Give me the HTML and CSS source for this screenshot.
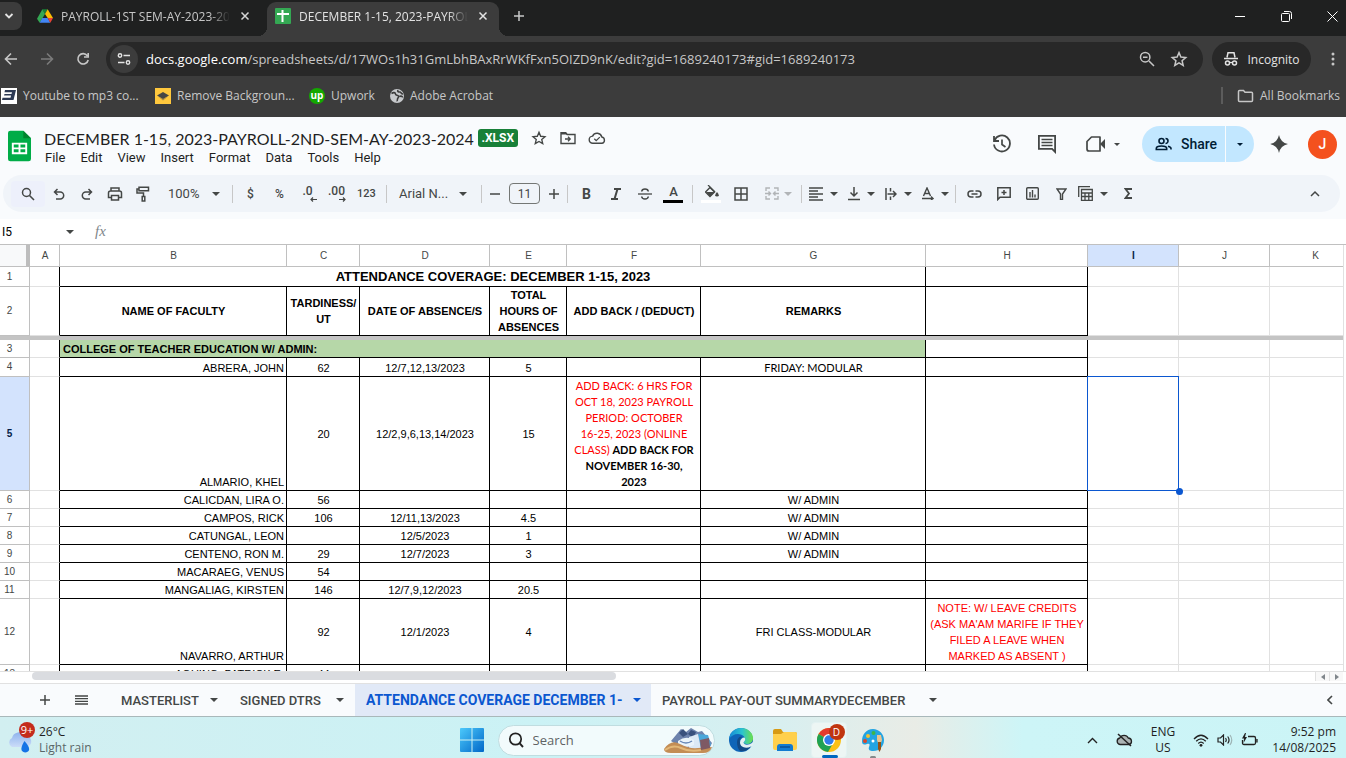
FILE: index.html
```html
<!DOCTYPE html>
<html lang="en">
<head>
  <meta charset="UTF-8">
  <meta name="viewport" content="width=device-width, initial-scale=1.0">
  <title>DECEMBER 1-15, 2023-PAYROLL-2ND-SEM-AY-2023-2024</title>
  <link rel="stylesheet" href="styles.css">
</head>
<body>

<!-- browser window -->
<div class="tabstrip">
  <button class="tab-search" aria-label="Search tabs"><svg width="10" height="10" viewBox="0 0 10 10"><path d="M1.500 3l3.500 3.500L8.500 3" fill="none" stroke="#e3e3e3" stroke-width="1.800"/></svg></button>
  <div class="tab">
    <svg width="16" height="16" viewBox="0 0 24 22"><path d="M8 1h8l-4 7z" fill="#188038"/><path d="M8 1L0 15l4 6 8-13z" fill="#34a853"/><path d="M16 1l-4 7 4 6h8z" fill="#fbbc04"/><path d="M4 21l4-7h8l4 7z" fill="#4285f4"/><path d="M16 14h8l-4 7z" fill="#ea4335"/></svg>
    <span class="tab-title">PAYROLL-1ST SEM-AY-2023-202</span>
    <button class="tab-close" aria-label="Close tab"><svg width="10" height="10" viewBox="0 0 10 10"><path d="M1.500 1.500l7 7m0-7l-7 7" stroke="#d5d5d5" stroke-width="1.500"/></svg></button>
  </div>
  <div class="tab active">
    <svg width="16" height="16" viewBox="0 0 16 16"><rect width="16" height="16" rx="1" fill="#34a853"/><path d="M6.500 2h2v12h-2zM2 5h12v2H2z" fill="#fff"/></svg>
    <span class="tab-title">DECEMBER 1-15, 2023-PAYROLL</span>
    <button class="tab-close" aria-label="Close tab"><svg width="10" height="10" viewBox="0 0 10 10"><path d="M1.500 1.500l7 7m0-7l-7 7" stroke="#e3e3e3" stroke-width="1.500"/></svg></button>
  </div>
  <button class="new-tab" aria-label="New tab"><svg width="12" height="12" viewBox="0 0 12 12"><path d="M6 1v10M1 6h10" stroke="#c7c7c7" stroke-width="1.500"/></svg></button>
  <div class="window-buttons">
    <button aria-label="Minimize"><svg width="11" height="11" viewBox="0 0 11 11"><path d="M0 5.500h10" stroke="#fff"/></svg></button>
    <button aria-label="Restore"><svg width="11" height="11" viewBox="0 0 11 11"><path d="M.5 3.500q0-1 1-1h6q1 0 1 1v6q0 1-1 1h-6q-1 0-1-1zM3 .5h5.500q2 0 2 2V8" fill="none" stroke="#fff"/></svg></button>
    <button aria-label="Close"><svg width="11" height="11" viewBox="0 0 11 11"><path d="M.5.5l10 10m0-10l-10 10" stroke="#fff"/></svg></button>
  </div>
</div>

<div class="navbar">
  <button class="nav-btn" aria-label="Back"><svg width="14" height="14" viewBox="0 0 14 14"><path d="M13 7H2m5-5.500L1.500 7 7 12.500" fill="none" stroke="#c7c7c7" stroke-width="1.600"/></svg></button>
  <button class="nav-btn" aria-label="Forward"><svg width="14" height="14" viewBox="0 0 14 14"><path d="M1 7h11M7 1.500L12.500 7 7 12.500" fill="none" stroke="#7b7b7b" stroke-width="1.600"/></svg></button>
  <button class="nav-btn" aria-label="Reload"><svg width="14" height="14" viewBox="0 0 14 14"><path d="M11.300 3.700A5.200 5.200 0 1 0 12.200 8M12.200 1v4H8" fill="none" stroke="#c7c7c7" stroke-width="1.600"/></svg></button>
  <div class="omnibox">
    <button class="site-info" aria-label="Site information"><svg width="14" height="14" viewBox="0 0 14 14"><path d="M6.500 3.500H13M1 10.500h6.500" stroke="#e3e3e3" stroke-width="1.500"/><circle cx="3" cy="3.500" r="1.700" fill="none" stroke="#e3e3e3" stroke-width="1.400"/><circle cx="11" cy="10.500" r="1.700" fill="none" stroke="#e3e3e3" stroke-width="1.400"/></svg></button>
    <p class="url"><b>docs.google.com</b>/spreadsheets/d/17WOs1h31GmLbhBAxRrWKfFxn5OIZD9nK/edit?gid=1689240173#gid=1689240173</p>
    <button class="omni-btn" aria-label="Zoom"><svg width="16" height="16" viewBox="0 0 16 16"><path d="M10 10l5 5M4 6.200h4.500" stroke="#c7c7c7" stroke-width="1.500"/><circle cx="6.200" cy="6.200" r="4.700" fill="none" stroke="#c7c7c7" stroke-width="1.500"/></svg></button>
    <button class="omni-btn" aria-label="Bookmark this page"><svg width="18" height="18" viewBox="0 0 24 24"><path d="M12 3.500l2.500 5.900 6.500.6-4.900 4.200 1.500 6.300L12 17.200l-5.600 3.300 1.500-6.300L3 10l6.500-.6z" fill="none" stroke="#c7c7c7" stroke-width="2"/></svg></button>
  </div>
  <button class="incognito"><svg width="16" height="16" viewBox="0 0 16 16"><path d="M1 7.500h14" stroke="#e3e3e3" stroke-width="1.500"/><path d="M4 6.500L5 1.800h6l1 4.700" fill="none" stroke="#e3e3e3" stroke-width="1.500"/><circle cx="4.500" cy="12" r="2" fill="none" stroke="#e3e3e3" stroke-width="1.500"/><circle cx="11.500" cy="12" r="2" fill="none" stroke="#e3e3e3" stroke-width="1.500"/><path d="M6.500 11.500h3" stroke="#e3e3e3" stroke-width="1.200"/></svg>Incognito</button>
  <button class="more" aria-label="Menu"><svg width="4" height="16" viewBox="0 0 4 16"><g fill="#c7c7c7"><circle cx="2" cy="3" r="1.500"/><circle cx="2" cy="8" r="1.500"/><circle cx="2" cy="13" r="1.500"/></g></svg></button>
</div>

<nav class="bookmarks">
  <a href="#" class="bm-mp3"><svg width="16" height="16" viewBox="0 0 16 16"><path d="M0 0h16v16H0z" fill="#fff"/><path d="M4 2h11l-2.500 10H1l.5-2.200h8l.6-2.200H3L3.500 6h7l.5-1.800H3.500z" fill="#2d3a54"/></svg><span>Youtube to mp3 co...</span></a>
  <a href="#" class="bm-bg"><svg width="16" height="16" viewBox="0 0 16 16"><path d="M0 0h16v16H0z" fill="#ffc83d"/><path d="M3 8.500l5 2.500 5-2.500-5 4z" fill="#a98a46"/><path d="M8 4l6 3.500-6 3.500-6-3.500z" fill="#454545"/></svg><span>Remove Backgroun...</span></a>
  <a href="#" class="bm-up"><span class="up-logo">up</span><span>Upwork</span></a>
  <a href="#"><svg width="14" height="14" viewBox="0 0 14 14"><circle cx="7" cy="7" r="7" fill="#c7c9cc"/><path d="M1.500 4.500c2-1.500 4-1 4 .5s2 1 3 2-1 2-1 3 0 2-1 2M8 1c-1 2 1 2 2 2s1 2 3 2M9.500 7.500c1.500-1 3 0 3 1" fill="none" stroke="#3c3c3c" stroke-width="1.600"/></svg><span>Adobe Acrobat</span></a>
  <a href="#" class="all-bookmarks"><svg width="17" height="14" viewBox="0 0 17 14"><path d="M1.500 2.500q0-1 1-1h4l1.500 1.700h6.500q1 0 1 1v7.300q0 1-1 1h-12q-1 0-1-1z" fill="none" stroke="#c7c7c7" stroke-width="1.500"/></svg><span>All Bookmarks</span></a>
</nav>

<!-- spreadsheet app -->
<header class="app-header">
  <svg class="sheets-logo" width="23" height="32" viewBox="0 0 24 32"><path d="M2.500 0H16l8 8v21.500q0 2.500-2.500 2.500h-19Q0 32 0 29.500v-27Q0 0 2.500 0z" fill="#00ac47"/><path d="M16 0l8 8h-8z" fill="#00832d"/><path d="M4 12.500h16v12H4zm2 2v3h5v-3zm7 0v3h5v-3zm-7 5v3h5v-3zm7 0v3h5v-3z" fill="#fff" fill-rule="evenodd"/></svg>
  <div class="doc">
    <div class="doc-top">
      <h1>DECEMBER 1-15, 2023-PAYROLL-2ND-SEM-AY-2023-2024</h1>
      <span class="badge">.XLSX</span>
      <button aria-label="Star"><svg width="16" height="16" viewBox="0 0 24 24"><path d="M12 3.500l2.500 5.900 6.500.6-4.900 4.200 1.500 6.300L12 17.200l-5.600 3.300 1.500-6.300L3 10l6.500-.6z" fill="none" stroke="#444746" stroke-width="2"/></svg></button>
      <button aria-label="Move"><svg width="16" height="14" viewBox="0 0 16 14"><path d="M1 1.800h4.700l1.500 1.700H15v9H1z" fill="none" stroke="#444746" stroke-width="1.400"/><path d="M1 1.500h5l1.500 2H1z" fill="#444746"/><path d="M5 8h5M8 5.800L10.200 8 8 10.200" fill="none" stroke="#444746" stroke-width="1.300"/></svg></button>
      <button aria-label="Document status"><svg width="18" height="14" viewBox="0 0 18 14"><path d="M5 12.300a3.600 3.600 0 0 1-.4-7.200A4.900 4.900 0 0 1 13.800 6a3.200 3.200 0 0 1 0 6.300z" fill="none" stroke="#444746" stroke-width="1.400"/><path d="M6.300 7.800l1.900 1.900 3.600-3.600" fill="none" stroke="#444746" stroke-width="1.300"/></svg></button>
    </div>
    <div class="menu">
      <button>File</button>
      <button>Edit</button>
      <button>View</button>
      <button>Insert</button>
      <button>Format</button>
      <button>Data</button>
      <button>Tools</button>
      <button>Help</button>
    </div>
  </div>
  <div class="header-actions">
    <button class="round" aria-label="Version history"><svg width="20" height="20" viewBox="0 0 20 20"><path d="M2.500 6.500A8 8 0 1 1 2 10.500M2 2v5h5" fill="none" stroke="#444746" stroke-width="1.800"/><path d="M10 5.500v5l3.500 2.500" fill="none" stroke="#444746" stroke-width="1.700"/></svg></button>
    <button class="round" aria-label="Comments"><svg width="20" height="20" viewBox="0 0 20 20"><path d="M1.900 1.900h16.200v16l-3-3H1.900z" fill="none" stroke="#444746" stroke-width="1.800"/><path d="M4.500 5.500h11m-11 3h11m-11 3h11" stroke="#444746" stroke-width="1.700"/></svg></button>
    <button class="meet" aria-label="Meet"><svg width="20" height="16" viewBox="0 0 20 16"><path d="M5.500 1H14v14H3q-2 0-2-2V5.500z" fill="none" stroke="#444746" stroke-width="1.700" stroke-linejoin="round"/><path d="M14 8l5-5v10z" fill="#444746"/></svg><i class="caret"></i></button>
    <div class="share">
      <button class="share-main"><svg width="18" height="14" viewBox="0 0 18 14"><g fill="none" stroke="#001d35" stroke-width="1.600"><circle cx="6.500" cy="4" r="2.500"/><path d="M1.300 12.500v-1q0-2.500 5.200-2.500t5.200 2.500v1zM10.500 1.500a2.500 2.500 0 0 1 0 5M13 9.300q3 .7 3 2.200v1"/></g></svg>Share</button>
      <button class="share-more" aria-label="Quick sharing actions"><i class="caret"></i></button>
    </div>
    <button class="round spark" aria-label="Ask Gemini"><svg width="18" height="18" viewBox="0 0 18 18"><path d="M9 0q1.500 7.500 9 9-7.500 1.500-9 9-1.500-7.500-9-9 7.500-1.500 9-9z" fill="#444746"/></svg></button>
    <button class="avatar" aria-label="Account">J</button>
  </div>
</header>

<div class="toolbar-wrap">
<div class="toolbar">
  <button class="tb search" aria-label="Search the menus"><svg width="14" height="14" viewBox="0 0 14 14"><circle cx="5.500" cy="5.500" r="4" fill="none" stroke="#444746" stroke-width="1.500"/><path d="M8.500 8.500L13 13" stroke="#444746" stroke-width="1.600"/></svg></button>
  <button class="tb small" aria-label="Undo"><svg width="12" height="12" viewBox="0 0 12 12"><path d="M4.500 1L1.500 4l3 3M1.500 4h5.700a3.400 3.400 0 0 1 0 7H3" fill="none" stroke="#444746" stroke-width="1.500"/></svg></button>
  <button class="tb small" aria-label="Redo"><svg width="12" height="12" viewBox="0 0 12 12"><path d="M7.500 1l3 3-3 3M10.500 4H4.800a3.400 3.400 0 0 0 0 7H9" fill="none" stroke="#444746" stroke-width="1.500"/></svg></button>
  <button class="tb small" aria-label="Print"><svg width="16" height="14" viewBox="0 0 16 14"><g fill="none" stroke="#444746" stroke-width="1.500"><path d="M4 4V1h8v3M4 10.500H1.500V6q0-2 2-2h9q2 0 2 2v4.500H12"/><path d="M4.500 8.500h7V13h-7z"/></g></svg></button>
  <button class="tb small" aria-label="Paint format"><svg width="14" height="16" viewBox="0 0 14 16"><g fill="none" stroke="#444746" stroke-width="1.500"><path d="M3 1.200h9.500v3.600H3zM3 3H1v4h6.500v3"/><path d="M6.200 10.500h2.600V15H6.200z"/></g></svg></button>
  <button class="zoom"><span>100%</span><i class="caret"></i></button>
  <i class="divider"></i>
  <button class="tb txt">$</button>
  <button class="tb txt">%</button>
  <button class="tb dec" aria-label="Decrease decimal places">.0<svg width="7" height="5" viewBox="0 0 7 5"><path d="M7 2.500H1M3 .5l-2 2 2 2" fill="none" stroke="#444746" stroke-width="1.200"/></svg></button>
  <button class="tb dec" aria-label="Increase decimal places">.00<svg width="7" height="5" viewBox="0 0 7 5"><path d="M0 2.500h6M4 .5l2 2-2 2" fill="none" stroke="#444746" stroke-width="1.200"/></svg></button>
  <button class="tb num">123</button>
  <i class="divider"></i>
  <button class="font"><span>Arial N...</span><i class="caret"></i></button>
  <i class="divider"></i>
  <button class="step" aria-label="Decrease font size"><svg width="10" height="10" viewBox="0 0 10 10"><path d="M0 5h10" stroke="#444746" stroke-width="1.500"/></svg></button>
  <input class="font-size" type="text" value="11" aria-label="Font size">
  <button class="step" aria-label="Increase font size"><svg width="10" height="10" viewBox="0 0 10 10"><path d="M0 5h10M5 0v10" stroke="#444746" stroke-width="1.500"/></svg></button>
  <i class="divider"></i>
  <button class="tb bold">B</button>
  <button class="tb" aria-label="Italic"><svg width="10" height="12" viewBox="0 0 10 12"><path d="M3 1h7M0 11h7M6.500 1l-3 10" stroke="#444746" stroke-width="2"/></svg></button>
  <button class="tb" aria-label="Strikethrough"><svg width="14" height="12" viewBox="0 0 14 12"><path d="M0 6h14" stroke="#444746" stroke-width="1.300"/><path d="M10.300 3.500Q10 1 7 1T3.700 3.500M3.700 8.500Q4 11 7 11t3.300-2.500" fill="none" stroke="#444746" stroke-width="1.500"/></svg></button>
  <button class="tb text-color" aria-label="Text color">A</button>
  <i class="divider"></i>
  <button class="tb fill-color" aria-label="Fill color"><svg width="14" height="13" viewBox="0 0 14 13"><path d="M3 0l7 7" stroke="#444746" stroke-width="1.300"/><path d="M5 2.500L9.500 7 5 11.500.5 7z" fill="none" stroke="#444746" stroke-width="1.400"/><path d="M1 7h8.500L5 11.500z" fill="#444746"/><path d="M12 7q3.500 4 0 4.500-3.500-.5 0-4.500z" fill="#444746"/></svg></button>
  <button class="tb" aria-label="Borders"><svg width="14" height="14" viewBox="0 0 14 14"><path d="M1 1h12v12H1zM7 1v12M1 7h12" fill="none" stroke="#444746" stroke-width="1.500"/></svg></button>
  <button class="drop merge" disabled aria-label="Merge cells"><svg width="14" height="13" viewBox="0 0 14 13"><path d="M5 1H1v3M9 1h4v3M5 12H1V9M9 12h4V9M0 6.500h5M3.500 4.500l2 2-2 2M14 6.500H9M10.500 4.500l-2 2 2 2" fill="none" stroke="#b1b4b7" stroke-width="1.400"/></svg><i class="caret"></i></button>
  <i class="divider"></i>
  <button class="drop" aria-label="Horizontal align"><svg width="14" height="14" viewBox="0 0 14 14"><path d="M0 1h14M0 4h9M0 7h14M0 10h9M0 13h14" stroke="#444746" stroke-width="1.500"/></svg><i class="caret"></i></button>
  <button class="drop" aria-label="Vertical align"><svg width="12" height="14" viewBox="0 0 12 14"><path d="M6 0v9M2.500 5.500L6 9l3.500-3.500M0 12.500h12" fill="none" stroke="#444746" stroke-width="1.500"/></svg><i class="caret"></i></button>
  <button class="drop" aria-label="Text wrapping"><svg width="12" height="12" viewBox="0 0 12 12"><path d="M1 0v12M5.500 0v3.500m0 5V12M2.500 6H11M8 3l3 3-3 3" fill="none" stroke="#444746" stroke-width="1.500"/></svg><i class="caret"></i></button>
  <button class="drop" aria-label="Text rotation"><svg width="12" height="13" viewBox="0 0 12 13"><path d="M1.500 9L5 1l3.500 8M2.700 6.500h4.600M0 11.500h11M9 9.500l2 2-2 1.500" fill="none" stroke="#444746" stroke-width="1.400"/></svg><i class="caret"></i></button>
  <i class="divider tight"></i>
  <button class="tb" aria-label="Insert link"><svg width="15" height="8" viewBox="0 0 15 8"><path d="M6.500 1H4a3 3 0 0 0 0 6h2.500M8.500 1H11a3 3 0 0 1 0 6H8.500M4.500 4h6" fill="none" stroke="#444746" stroke-width="1.500"/></svg></button>
  <button class="tb" aria-label="Insert comment"><svg width="14" height="14" viewBox="0 0 14 14"><path d="M.8.800h12.400v9.400H3L.8 12.500zM7 3v5M4.500 5.500h5" fill="none" stroke="#444746" stroke-width="1.500"/></svg></button>
  <button class="tb" aria-label="Insert chart"><svg width="13" height="13" viewBox="0 0 13 13"><rect x=".7" y=".7" width="11.600" height="11.600" rx="1" fill="none" stroke="#444746" stroke-width="1.400"/><path d="M4 5v5.500M6.500 3v7.500M9 7.500v3" stroke="#444746" stroke-width="1.400"/></svg></button>
  <button class="tb" aria-label="Create a filter"><svg width="11" height="12" viewBox="0 0 11 12"><path d="M1 1h9L6.500 6v5.500h-2V6z" fill="none" stroke="#444746" stroke-width="1.400"/></svg></button>
  <button class="drop" aria-label="Tables"><svg width="15" height="15" viewBox="0 0 15 15"><path d="M.7 11V.7H12" fill="none" stroke="#444746" stroke-width="1.300"/><path d="M3.500 3.500h10.800v10.800H3.500zM3.500 7h10.800M3.500 10.500h10.800M7 7v7.300M10.800 7v7.300" fill="none" stroke="#444746" stroke-width="1.300"/></svg><i class="caret"></i></button>
  <button class="tb" aria-label="Functions"><svg width="8" height="11" viewBox="0 0 8 11"><path d="M8 1H1.500L5 5.500 1.500 10H8" fill="none" stroke="#444746" stroke-width="1.800"/></svg></button>
  <button class="tb collapse" aria-label="Hide the menus"><svg width="10" height="7" viewBox="0 0 10 7"><path d="M1 6l4-4 4 4" fill="none" stroke="#444746" stroke-width="1.500"/></svg></button>
</div>
</div>

<div class="formula-bar">
  <input class="name-box" type="text" value="I5" aria-label="Name box">
  <i class="caret"></i>
  <label class="fx" for="formula">fx</label>
  <input id="formula" class="formula" type="text">
</div>

<main class="grid">
  <table>
    <colgroup>
      <col class="w-head"><col class="w-a"><col class="w-b"><col class="w-c"><col class="w-d"><col class="w-e"><col class="w-f"><col class="w-g"><col class="w-h"><col class="w-i"><col class="w-i"><col class="w-i">
    </colgroup>
    <thead>
      <tr class="letters"><th class="corner"></th><th>A</th><th>B</th><th>C</th><th>D</th><th>E</th><th>F</th><th>G</th><th>H</th><th class="on">I</th><th>J</th><th>K</th></tr>
    </thead>
    <tbody>
      <tr class="r1"><th>1</th><td class="a"></td><td class="k title" colspan="6">ATTENDANCE COVERAGE: DECEMBER 1-15, 2023</td><td class="k"></td><td></td><td></td><td></td></tr>
      <tr class="r2"><th>2</th><td class="a"></td><td class="k">NAME OF FACULTY</td><td class="k">TARDINESS/<br>UT</td><td class="k">DATE OF ABSENCE/S</td><td class="k">TOTAL<br>HOURS OF<br>ABSENCES</td><td class="k">ADD BACK / (DEDUCT)</td><td class="k">REMARKS</td><td class="k"></td><td></td><td></td><td></td></tr>
      <tr class="freeze"><td colspan="12"></td></tr>
      <tr><th>3</th><td class="a"></td><td class="k college" colspan="6">COLLEGE OF TEACHER EDUCATION W/ ADMIN:</td><td class="k"></td><td></td><td></td><td></td></tr>
      <tr class="r4"><th>4</th><td class="a"></td><td class="k name">ABRERA, JOHN</td><td class="k">62</td><td class="k">12/7,12,13/2023</td><td class="k">5</td><td class="k"></td><td class="k lato">FRIDAY: MODULAR</td><td class="k"></td><td></td><td></td><td></td></tr>
      <tr class="r5"><th class="on">5</th><td class="a"></td><td class="k name">ALMARIO, KHEL</td><td class="k">20</td><td class="k">12/2,9,6,13,14/2023</td><td class="k">15</td><td class="k lato red">ADD BACK: 6 HRS FOR<br>OCT 18, 2023 PAYROLL<br>PERIOD: OCTOBER<br>16-25, 2023 (ONLINE<br>CLASS) <b>ADD BACK FOR<br>NOVEMBER 16-30,<br>2023</b></td><td class="k"></td><td class="k"></td><td class="selected"></td><td></td><td></td></tr>
      <tr><th>6</th><td class="a"></td><td class="k name">CALICDAN, LIRA O.</td><td class="k">56</td><td class="k"></td><td class="k"></td><td class="k"></td><td class="k">W/ ADMIN</td><td class="k"></td><td></td><td></td><td></td></tr>
      <tr><th>7</th><td class="a"></td><td class="k name">CAMPOS, RICK</td><td class="k">106</td><td class="k">12/11,13/2023</td><td class="k">4.5</td><td class="k"></td><td class="k">W/ ADMIN</td><td class="k"></td><td></td><td></td><td></td></tr>
      <tr><th>8</th><td class="a"></td><td class="k name">CATUNGAL, LEON</td><td class="k"></td><td class="k">12/5/2023</td><td class="k">1</td><td class="k"></td><td class="k">W/ ADMIN</td><td class="k"></td><td></td><td></td><td></td></tr>
      <tr><th>9</th><td class="a"></td><td class="k name">CENTENO, RON M.</td><td class="k">29</td><td class="k">12/7/2023</td><td class="k">3</td><td class="k"></td><td class="k">W/ ADMIN</td><td class="k"></td><td></td><td></td><td></td></tr>
      <tr><th>10</th><td class="a"></td><td class="k name">MACARAEG, VENUS</td><td class="k">54</td><td class="k"></td><td class="k"></td><td class="k"></td><td class="k"></td><td class="k"></td><td></td><td></td><td></td></tr>
      <tr><th>11</th><td class="a"></td><td class="k name">MANGALIAG, KIRSTEN</td><td class="k">146</td><td class="k">12/7,9,12/2023</td><td class="k">20.5</td><td class="k"></td><td class="k"></td><td class="k"></td><td></td><td></td><td></td></tr>
      <tr class="r12"><th>12</th><td class="a"></td><td class="k name">NAVARRO, ARTHUR</td><td class="k">92</td><td class="k">12/1/2023</td><td class="k">4</td><td class="k"></td><td class="k">FRI CLASS-MODULAR</td><td class="k red">NOTE: W/ LEAVE CREDITS<br>(ASK MA'AM MARIFE IF THEY<br>FILED A LEAVE WHEN<br>MARKED AS ABSENT )</td><td></td><td></td><td></td></tr>
      <tr><th>13</th><td class="a"></td><td class="k name">AQUINO, PATRICK E.</td><td class="k">44</td><td class="k"></td><td class="k"></td><td class="k"></td><td class="k"></td><td class="k"></td><td></td><td></td><td></td></tr>
    </tbody>
  </table>
</main>

<div class="hscroll">
  <div class="thumb"></div>
  <button aria-label="Scroll left"><svg width="4" height="6" viewBox="0 0 4 6"><path d="M4 0v6L0 3z" fill="#80868b"/></svg></button>
  <button aria-label="Scroll right"><svg width="4" height="6" viewBox="0 0 4 6"><path d="M0 0v6l4-3z" fill="#80868b"/></svg></button>
</div>

<div class="sheet-tabs">
  <button class="sheet-btn" aria-label="Add sheet"><svg width="10" height="10" viewBox="0 0 10 10"><path d="M0 5h10M5 0v10" stroke="#444746" stroke-width="1.500"/></svg></button>
  <button class="sheet-btn" aria-label="All sheets"><svg width="13" height="10" viewBox="0 0 13 10"><path d="M0 1h13M0 3.700h13M0 6.300h13M0 9h13" stroke="#444746" stroke-width="1.300"/></svg></button>
  <button class="sheet masterlist"><span>MASTERLIST</span><i class="caret"></i></button>
  <button class="sheet dtrs"><span>SIGNED DTRS</span><i class="caret"></i></button>
  <button class="sheet current"><span>ATTENDANCE COVERAGE DECEMBER 1-</span><i class="caret"></i></button>
  <button class="sheet summary"><span>PAYROLL PAY-OUT SUMMARYDECEMBER</span><i class="caret"></i></button>
  <button class="side-panel" aria-label="Show side panel"><svg width="6" height="10" viewBox="0 0 6 10"><path d="M5 1L1 5l4 4" fill="none" stroke="#444746" stroke-width="1.600"/></svg></button>
</div>

<!-- windows taskbar -->
<footer class="taskbar">
  <div class="weather">
    <svg width="26" height="26" viewBox="0 0 26 26"><defs><linearGradient id="cloud" x1="0" y1="0" x2="0" y2="1"><stop offset="0" stop-color="#8fb4ee"/><stop offset="1" stop-color="#cbdcf8"/></linearGradient></defs><path d="M5 20a5 5 0 0 1 0-9 7 7 0 0 1 13-2 5.600 5.600 0 0 1 2 11z" fill="url(#cloud)"/><path d="M17.500 14q7 8 3.500 10.500-3.500 2-6-.5-2-3 2.500-10z" fill="#1573e6"/></svg>
    <span class="count">9+</span>
    <div class="weather-text"><strong>26°C</strong><span>Light rain</span></div>
  </div>
  <div class="apps">
    <button class="start" aria-label="Start"><svg width="24" height="24" viewBox="0 0 24 24"><defs><linearGradient id="win" x1="0" y1="0" x2="1" y2="1"><stop offset="0" stop-color="#4cc9fb"/><stop offset="1" stop-color="#0067c8"/></linearGradient></defs><path d="M0 1q0-1 1-1h10.500v11.500H0zM12.500 0H23q1 0 1 1v10.500H12.500zM0 12.500h11.500V24H1q-1 0-1-1zM12.500 12.500H24V23q0 1-1 1H12.500z" fill="url(#win)"/></svg></button>
    <div class="search-box">
      <svg width="16" height="16" viewBox="0 0 16 16"><circle cx="7.500" cy="7" r="5.700" fill="none" stroke="#222" stroke-width="1.700"/><path d="M11.500 11.200L15 15" stroke="#222" stroke-width="1.900"/></svg>
      <input type="text" placeholder="Search" aria-label="Search">
      <svg width="50" height="26" viewBox="0 0 50 26"><path d="M8 14L18 2l5 3 5-4 7 4 4-1 10 12-3 6H20z" fill="#6d83ad"/><path d="M16 6l4-4 5 5-5 3zM28 3l5 2-3 6-5-4z" fill="#39517d"/><path d="M35 7l10 1 3 10-10 4z" fill="#4ba7d9"/><path d="M26 10l9-3 3 15-12 1z" fill="#dbe9f5"/><path d="M15 14q8-6 16-1v5q-8 4-16 0z" fill="#eaf4fa"/><path d="M17 14q6 4 12 0" fill="none" stroke="#6686b5" stroke-width="1.500"/><path d="M1 22q7-10 16-5 9 5 18 4l14-1q-2 6-9 6H8q-7 0-7-4z" fill="#c38d55"/><path d="M2 23q8-6 16-2t20 2" fill="none" stroke="#e3b878" stroke-width="2"/><path d="M37 13l9-2 1 10-9 2z" fill="#7e5964"/></svg>
    </div>
    <button class="app" aria-label="Edge"><svg width="24" height="24" viewBox="0 0 24 24"><defs><linearGradient id="edge" x1="0" y1="0" x2="1" y2="0"><stop offset="0" stop-color="#1389d8"/><stop offset=".55" stop-color="#2cc4cf"/><stop offset="1" stop-color="#6de04b"/></linearGradient></defs><circle cx="12" cy="12" r="12" fill="#0f65b8"/><path d="M0 11C1 4 6 0 12 0c7 0 12 5 12 10 0 4-3 6-6 6-2 0-4-1-3-2 3-4-1-8-6-8-4 0-7 2-9 5z" fill="url(#edge)"/><path d="M8 14c0-4 3-6 5-5-5 4-1 10 4 10 2 0 4-1 5-1-3 5-8 6-11 5-2-2-3-5-3-9z" fill="#124a86"/><path d="M15.500 9.500c1.500 2 0 4-1 5 1 3 5 3 9 0l.5-1v4l-2 1c-6 3-11 0-11-4 0-3 2-5 4.500-5z" fill="#e3f1f2"/></svg></button>
    <button class="app" aria-label="File Explorer"><svg width="24" height="22" viewBox="0 0 24 22"><path d="M0 2q0-2 2-2h6l2 3h12q2 0 2 2v5H0z" fill="#d79a14"/><path d="M0 5h8l3-2h11q2 0 2 2v14q0 2-2 2H2q-2 0-2-2z" fill="#ffd04c"/><path d="M4 22v-4q0-3 3-3h10q3 0 3 3v4z" fill="#127bd0"/><path d="M7 18h10" stroke="#0a4f94" stroke-width="1.500"/></svg></button>
    <button class="app chrome" aria-label="Chrome"><svg width="24" height="24" viewBox="0 0 24 24"><circle cx="12" cy="12" r="12" fill="#fbc116"/><path d="M12 12L1.600 6A12 12 0 0 1 22.400 6z" fill="#e33b2e"/><path d="M12 12L1.600 6A12 12 0 0 0 11 24l5.500-9.500z" fill="#1fa254"/><circle cx="12" cy="12" r="6" fill="#fff"/><circle cx="12" cy="12" r="4.700" fill="#2f7de9"/></svg><span class="profile">D</span></button>
    <button class="app paint" aria-label="Paint"><svg width="24" height="24" viewBox="0 0 24 24"><path d="M12 1C5 1 1 7 1 13c0 4 2 4 5 3 3-1 3 1 2 3-1 3 1 4 4 4 7 0 11-5 11-11S18 1 12 1z" fill="#22a4e2"/><circle cx="7" cy="8" r="2" fill="#f2c230"/><circle cx="12.500" cy="5" r="2" fill="#3bb54a"/><circle cx="4" cy="13" r="2" fill="#d8472b"/><circle cx="12" cy="13" r="1.500" fill="#fff"/><path d="M16 7h4l1 5-1 3h-3l-1-3z" fill="#e9c391"/><path d="M17 14h3v7l-1.500 3-1.500-3z" fill="#935216"/></svg></button>
  </div>
  <div class="tray">
    <button class="up" aria-label="Show hidden icons"><svg width="11" height="7" viewBox="0 0 11 7"><path d="M1 6l4.500-4.500L10 6" fill="none" stroke="#222" stroke-width="1.400"/></svg></button>
    <button class="cloud" aria-label="OneDrive"><svg width="17" height="14" viewBox="0 0 17 14"><path d="M4 11.500a3.300 3.300 0 0 1-.2-6.500A4.700 4.700 0 0 1 12.300 5a3.300 3.300 0 0 1 .7 6.500z" fill="#abb3b3" stroke="#222" stroke-width="1.300"/><path d="M2 1l13 12" stroke="#222" stroke-width="1.500"/></svg></button>
    <div class="lang"><span>ENG</span><span>US</span></div>
    <svg class="wifi" width="16" height="13" viewBox="0 0 16 13"><path d="M1 5q7-7.500 14 0M3.200 7.300q4.800-5 9.600 0M5.300 9.500q2.700-2.800 5.400 0" fill="none" stroke="#222" stroke-width="1.300"/><circle cx="8" cy="11.300" r="1.400" fill="#222"/></svg>
    <svg class="volume" width="16" height="12" viewBox="0 0 16 12"><path d="M1 4h2.500L6.500 1v10l-3-3H1zM8.500 4q1.500 2 0 4M10.700 2.500q2.700 3.500 0 7" fill="none" stroke="#222" stroke-width="1.200"/><path d="M13 1q3.500 5 0 10" fill="none" stroke="#9fb5b6" stroke-width="1.200"/></svg>
    <svg class="battery" width="17" height="14" viewBox="0 0 17 14"><path d="M7 3.500h6q1.500 0 1.500 1.500v5q0 1.500-1.500 1.500H3q-1.500 0-1.500-1.500V7M16 6v3.500" fill="none" stroke="#222" stroke-width="1.300"/><path d="M4 0L1 5.500h2L2.500 10l3.500-6H4l1-4z" fill="#222"/></svg>
    <div class="clock"><span>9:52 pm</span><span>14/08/2025</span></div>
  </div>
</footer>

</body>
</html>
```
FILE: styles.css
```css
* {
  margin: 0;
  padding: 0;
  box-sizing: border-box;
}

body {
  display: flex;
  flex-direction: column;
  height: 100vh;
  overflow: hidden;
  background-color: #fff;
  font-family: "Open Sans", "Noto Sans", sans-serif;
  font-size: 12px;
}

button, input {
  border: none;
  background: none;
  font: inherit;
  color: inherit;
}

input {
  outline: none;
  min-width: 0;
}

button {
  display: flex;
  align-items: center;
  justify-content: center;
  flex-shrink: 0;
}

svg {
  display: block;
  flex-shrink: 0;
}

a {
  color: inherit;
  text-decoration: none;
}

.caret {
  flex-shrink: 0;
  border: 4px solid transparent;
  border-top-color: #444746;
  border-bottom: none;
}

/* browser */

.tabstrip {
  display: flex;
  align-items: center;
  height: 36px;
  background-color: #1f2020;
  flex-shrink: 0;
}

.tab-search {
  width: 22px;
  height: 28px;
  background-color: #3c3c3c;
  border-radius: 0 8px 8px 0;
  margin-bottom: 4px;
  padding-right: 4px;
}

.tab {
  display: flex;
  align-items: center;
  height: 34px;
  margin-top: 2px;
  padding: 0 12px 6px 15px;
  width: 245px;
  color: #c7c7c7;
}

.tab.active {
  position: relative;
  width: 232px;
  padding-left: 8px;
  padding-right: 6px;
  background-color: #3c3c3c;
  border-radius: 9px 9px 0 0;
  color: #e3e3e3;
}

.tab.active::before,
.tab.active::after {
  content: "";
  position: absolute;
  bottom: 0;
  width: 9px;
  height: 9px;
}

.tab.active::before {
  left: -9px;
  background: radial-gradient(circle at 0 0, transparent 9px, #3c3c3c 9px);
}

.tab.active::after {
  right: -9px;
  background: radial-gradient(circle at 9px 0, transparent 9px, #3c3c3c 9px);
}

.tab-title {
  flex: 1;
  margin-left: 8px;
  overflow: hidden;
  white-space: nowrap;
  -webkit-mask-image: linear-gradient(to right, #000 88%, transparent);
  mask-image: linear-gradient(to right, #000 88%, transparent);
}

.tab-close {
  width: 20px;
  height: 20px;
  margin-left: 5px;
}

.new-tab {
  width: 28px;
  height: 28px;
  margin: 0 0 4px 6px;
}

.window-buttons {
  display: flex;
  margin-left: auto;
  margin-right: -9px;
  margin-bottom: 4px;
}

.window-buttons button {
  width: 46px;
  height: 32px;
}

.navbar {
  display: flex;
  align-items: center;
  height: 46px;
  background-color: #3c3c3c;
  flex-shrink: 0;
}

.nav-btn {
  width: 36px;
  height: 34px;
}

.nav-btn:first-child {
  margin-left: -7px;
}

.omnibox {
  display: flex;
  align-items: center;
  flex: 1;
  min-width: 0;
  height: 34px;
  margin-left: 5px;
  padding: 0 8px 0 4px;
  background-color: #282828;
  border-radius: 17px;
}

.site-info {
  width: 28px;
  height: 28px;
  border-radius: 14px;
  background-color: #3c3c3c;
}

.url {
  flex: 1;
  margin-left: 8px;
  overflow: hidden;
  white-space: nowrap;
  font-size: 13px;
  color: #c7c7c7;
}

.url b {
  font-weight: normal;
  color: #fff;
}

.omni-btn {
  width: 32px;
  height: 28px;
}

.incognito {
  gap: 8px;
  width: 99px;
  height: 34px;
  margin-left: 9px;
  border-radius: 17px;
  background-color: #282828;
  color: #e3e3e3;
}

.more {
  width: 35px;
  height: 34px;
  padding-left: 8px;
}

.bookmarks {
  display: flex;
  align-items: center;
  height: 35px;
  padding: 0 6px 8px 1px;
  background-color: #3c3c3c;
  color: #c7c7c7;
  flex-shrink: 0;
}

.bookmarks a {
  display: flex;
  align-items: center;
  gap: 6px;
  white-space: nowrap;
}

.bookmarks .bm-mp3 {
  width: 154px;
}

.bookmarks .bm-bg {
  width: 154px;
}

.bookmarks .bm-up {
  width: 81px;
}

.up-logo {
  width: 16px;
  height: 16px;
  border-radius: 8px;
  background-color: #14a800;
  color: #fff;
  font-size: 10px;
  font-weight: bold;
  line-height: 14px;
  text-align: center;
}

.bookmarks .all-bookmarks {
  margin-left: auto;
  padding-left: 14px;
  border-left: 2px solid #5c5c5c;
}

/* app header */

.app-header {
  display: flex;
  align-items: flex-start;
  height: 58px;
  padding: 0 9px 0 8px;
  background-color: #f9fbfd;
  font-family: Inter, Roboto, sans-serif;
  color: #1f1f1f;
  flex-shrink: 0;
}

.sheets-logo {
  margin-top: 13px;
}

.doc {
  flex: 1;
  margin-left: 13px;
}

.doc-top {
  display: flex;
  align-items: center;
  height: 22px;
  margin-top: 10px;
}

h1 {
  font-family: Lato, sans-serif;
  font-size: 16px;
  font-weight: normal;
  white-space: nowrap;
}

.badge {
  width: 40px;
  height: 18px;
  margin: 0 7px 0 4px;
  border-radius: 3px;
  background-color: #188038;
  color: #fff;
  font-family: Roboto, sans-serif;
  font-size: 12px;
  font-weight: bold;
  line-height: 18px;
  text-align: center;
}

.doc-top button {
  width: 29px;
  height: 22px;
}

.menu {
  display: flex;
  gap: 15px;
  margin-top: 1px;
  padding-left: 1px;
}

.menu button {
  font-family: Roboto, sans-serif;
  font-size: 13px;
  line-height: 16px;
}

.header-actions {
  display: flex;
  align-items: center;
  height: 36px;
  margin-top: 9px;
}

.round {
  width: 45px;
  height: 36px;
}

.meet {
  gap: 8px;
  width: 73px;
  height: 36px;
  padding-right: 5px;
}

.meet .caret,
.share .caret {
  border-width: 3px;
  border-bottom: none;
}

.share {
  display: flex;
  gap: 1px;
  height: 36px;
}

.share-main {
  gap: 8px;
  width: 83px;
  border-radius: 18px 0 0 18px;
  padding-left: 5px;
  background-color: #c2e7ff;
  color: #001d35;
  font-family: Roboto, sans-serif;
  font-size: 14px;
  font-weight: 500;
}

.share-more {
  width: 28px;
  border-radius: 0 18px 18px 0;
  background-color: #c2e7ff;
}

.share-more .caret {
  border-top-color: #001d35;
}

.spark {
  width: 50px;
}

.avatar {
  width: 29px;
  height: 29px;
  margin-left: 4px;
  border-radius: 50%;
  background-color: #f4511e;
  color: #fff;
  font-family: Roboto, sans-serif;
  font-size: 14px;
  font-weight: 500;
}

/* toolbar */

.toolbar-wrap {
  padding: 0 6px 7px 3px;
  background-color: #f9fbfd;
  flex-shrink: 0;
}

.toolbar {
  display: flex;
  align-items: center;
  height: 37px;
  padding: 0 11px 0 8px;
  border-radius: 19px;
  background-color: #f0f4f9;
  font-family: Roboto, sans-serif;
  font-size: 13px;
  color: #444746;
}

.tb {
  width: 29px;
  height: 26px;
}

.tb.search {
  width: 34px;
  border-radius: 4px;
  background-color: #edf0fb;
}

.tb.small {
  width: 28px;
}

.zoom,
.font {
  justify-content: space-between;
  height: 26px;
}

.zoom {
  width: 71px;
  padding: 0 8px 0 11px;
}

.font {
  width: 86px;
  padding: 0 10px 0 8px;
}

.divider {
  width: 1px;
  height: 18px;
  margin: 0 4px;
  background-color: #c7c7c7;
  flex-shrink: 0;
}

.divider.tight {
  margin-left: 1px;
}

.tb.txt,
.tb.num {
  padding-right: 2px;
  font-size: 12px;
  font-weight: 500;
}

.tb.num {
  font-size: 11px;
}

.tb.dec {
  flex-direction: column;
  align-items: center;
  padding-right: 4px;
  font-size: 12px;
  font-weight: 500;
  line-height: 12px;
}

.tb.dec svg {
  margin-left: 12px;
}

.step {
  width: 18px;
  height: 26px;
}

.font-size {
  width: 31px;
  height: 21px;
  margin: 0 5px;
  border: 1px solid #747775;
  border-radius: 4px;
  font-size: 12px;
  text-align: center;
}

.tb.bold {
  font-size: 14px;
  font-weight: bold;
}

.tb.text-color,
.tb.fill-color {
  position: relative;
  padding-bottom: 4px;
  font-weight: 500;
}

.tb.text-color::after,
.tb.fill-color::after {
  content: "";
  position: absolute;
  left: 4px;
  bottom: 4px;
  width: 20px;
  height: 3px;
  background-color: #000;
}

.tb.fill-color::after {
  background-color: #fff;
}

.drop {
  justify-content: flex-end;
  gap: 7px;
  width: 37px;
  height: 26px;
  padding-right: 5px;
}

.drop.merge {
  gap: 5px;
  margin-left: 5px;
}

.drop.merge .caret {
  border-top-color: #b1b4b7;
}

.collapse {
  margin-left: auto;
}

.formula-bar {
  display: flex;
  align-items: center;
  height: 26px;
  padding-left: 2px;
  border-bottom: 1px solid #c0c0c0;
  font-family: Roboto, sans-serif;
  flex-shrink: 0;
}

.name-box {
  width: 64px;
}

.fx {
  width: 32px;
  margin-left: 21px;
  color: #80868b;
  font-family: "Liberation Serif", serif;
  font-size: 15px;
  font-style: italic;
}

.formula {
  flex: 1;
}

/* grid */

.grid {
  flex: 1;
  min-height: 0;
  margin-right: 2px;
  overflow: hidden;
  border-right: 1px solid #e1e1e1;
}

table {
  width: 1361px;
  table-layout: fixed;
  border-spacing: 0;
  font-family: "Arial Narrow", "Liberation Sans", sans-serif;
  font-size: 11px;
  line-height: 16px;
  color: #000;
}

.w-head, .w-a { width: 30px; }
.w-b { width: 227px; }
.w-c { width: 73px; }
.w-d { width: 130px; }
.w-e { width: 77px; }
.w-f { width: 134px; }
.w-g { width: 225px; }
.w-h { width: 162px; }
.w-i { width: 91px; }

tr {
  height: 18px;
}

th {
  padding-left: 1px;
  border-right: 1px solid #c0c0c0;
  border-bottom: 1px solid #c0c0c0;
  color: #444746;
  font-family: "Liberation Sans", sans-serif;
  font-size: 10px;
  font-weight: normal;
}

tbody th {
  padding-right: 11px;
}

td {
  padding-top: 1px;
  padding-left: 1px;
  border-right: 1px solid #e1e1e1;
  border-bottom: 1px solid #e1e1e1;
  text-align: center;
  white-space: nowrap;
}

td.a,
td.k {
  border-right-color: #000;
}

td.k {
  border-bottom-color: #000;
}

.letters { height: 22px; }
.r1 { height: 20px; }
.r2 { height: 49px; }
.r4 { height: 19px; }
.r5 { height: 114px; }
.r12 { height: 66px; }

.r2 td {
  padding-top: 0;
}

.corner {
  background-color: #f8f9fa;
  border-right: 4px solid #bdbdbd;
}

th.on {
  background-color: #d3e3fd;
  color: #041e49;
  font-weight: bold;
}

.r2 td,
.college {
  font-weight: bold;
}

td.title {
  font-size: 13px;
  font-weight: bold;
}

.freeze {
  height: 4px;
}

.freeze td {
  padding: 0;
  border: none;
  background-color: #c4c4c4;
}

td.college {
  padding-left: 3px;
  background-color: #b6d7a8;
  text-align: left;
}

td.name {
  padding-right: 2px;
  text-align: right;
  vertical-align: bottom;
}

.lato {
  font-family: Lato, sans-serif;
  font-size: 11px;
}

.red {
  color: #f00;
}

.red b {
  color: #000;
}

.selected {
  position: relative;
}

.selected::before {
  content: "";
  position: absolute;
  inset: -1px;
  border: 1px solid #0b57d0;
}

.selected::after {
  content: "";
  position: absolute;
  right: -5px;
  bottom: -5px;
  width: 7px;
  height: 7px;
  border-radius: 50%;
  background-color: #0b57d0;
}

/* scrollbar and sheet tabs */

.hscroll {
  display: flex;
  height: 12px;
  padding: 0 3px 2px 32px;
  border-top: 1px solid #e1e1e1;
  flex-shrink: 0;
}

.thumb {
  width: 584px;
  height: 8px;
  margin-right: auto;
  border-radius: 4px;
  background-color: #dadce0;
}

.hscroll button {
  width: 14px;
  border-left: 1px solid #e1e1e1;
  background-color: #f8f8f8;
}

.sheet-tabs {
  display: flex;
  height: 34px;
  padding-left: 26px;
  border-top: 1px solid #e1e1e1;
  border-bottom: 1px solid #a9b8ba;
  background-color: #f9fbfd;
  font-family: Roboto, sans-serif;
  font-size: 13px;
  font-weight: 500;
  color: #444746;
  flex-shrink: 0;
}

.sheet-btn {
  width: 37px;
}

.sheet {
  justify-content: space-between;
  padding: 0 11px;
}

.sheet-btn + .sheet {
  margin-left: 10px;
}

.masterlist { width: 119px; }
.dtrs { width: 126px; }

.sheet.summary {
  width: 296px;
  padding-right: 10px;
}

.sheet.current {
  width: 296px;
  padding-right: 10px;
  background-color: #e1e9f7;
  color: #0b57d0;
  font-size: 14px;
  font-weight: bold;
}

.sheet.current .caret {
  border-top-color: #0b57d0;
}

.side-panel {
  width: 32px;
  margin-left: auto;
}

/* taskbar */

.taskbar {
  display: grid;
  grid-template-columns: 1fr auto 1fr;
  align-items: center;
  height: 41px;
  padding-top: 5px;
  background: linear-gradient(to right, #d2eff1, #cbf2f5 40%, #d8eff0 58%, #e9ece6 68%, #cdf5f7 76%, #cbf4f6);
  color: #1f1f1f;
  flex-shrink: 0;
}

.weather {
  position: relative;
  display: flex;
  align-items: center;
  gap: 6px;
  padding-left: 7px;
}

.count {
  position: absolute;
  left: 19px;
  top: -2px;
  width: 16px;
  height: 16px;
  border-radius: 8px;
  background-color: #c42b1c;
  color: #fff;
  font-size: 11px;
  line-height: 16px;
  text-align: center;
}

.weather-text {
  display: flex;
  flex-direction: column;
  line-height: 16px;
}

.weather-text strong {
  font-weight: normal;
}

.weather-text span {
  color: #5a6667;
}

.apps {
  display: flex;
  align-items: center;
}

.search-box {
  display: flex;
  align-items: center;
  width: 217px;
  height: 31px;
  margin: 0 8px 0 14px;
  padding: 0 1px 0 9px;
  border: 1px solid #c0dde0;
  border-radius: 16px;
  background-color: #f2fbfc;
}

.search-box input {
  flex: 1;
  margin-left: 9px;
  font-size: 13px;
}

.search-box input::placeholder {
  color: #5f6364;
  opacity: 1;
}

.app {
  position: relative;
  width: 36px;
  height: 36px;
  margin-right: 8px;
}

.app.chrome {
  border: 1px solid #e3f2f2;
  border-radius: 4px;
  background-color: #edf6f4;
}

.app.chrome::after,
.app.paint::after {
  content: "";
  position: absolute;
  left: 10px;
  bottom: -1px;
  width: 16px;
  height: 3px;
  border-radius: 2px;
  background-color: #0067c0;
}

.app.paint {
  margin-right: -4px;
}

.app.paint::after {
  left: 15px;
  width: 6px;
  background-color: #858b8b;
}

.profile {
  position: absolute;
  top: 1px;
  right: 1px;
  width: 16px;
  height: 16px;
  border-radius: 8px;
  background-color: #c0350f;
  color: #fff;
  font-size: 10px;
  line-height: 16px;
}

.tray {
  display: flex;
  align-items: center;
  justify-content: flex-end;
  padding-right: 10px;
  line-height: 16px;
}

.lang,
.clock {
  display: flex;
  flex-direction: column;
}

.lang {
  align-items: center;
  width: 24px;
  margin: 0 18px;
}

.clock {
  align-items: flex-end;
  width: 62px;
  margin-left: 16px;
}

.cloud {
  margin-left: 18px;
}

.volume,
.battery {
  margin-left: 8px;
}
```
